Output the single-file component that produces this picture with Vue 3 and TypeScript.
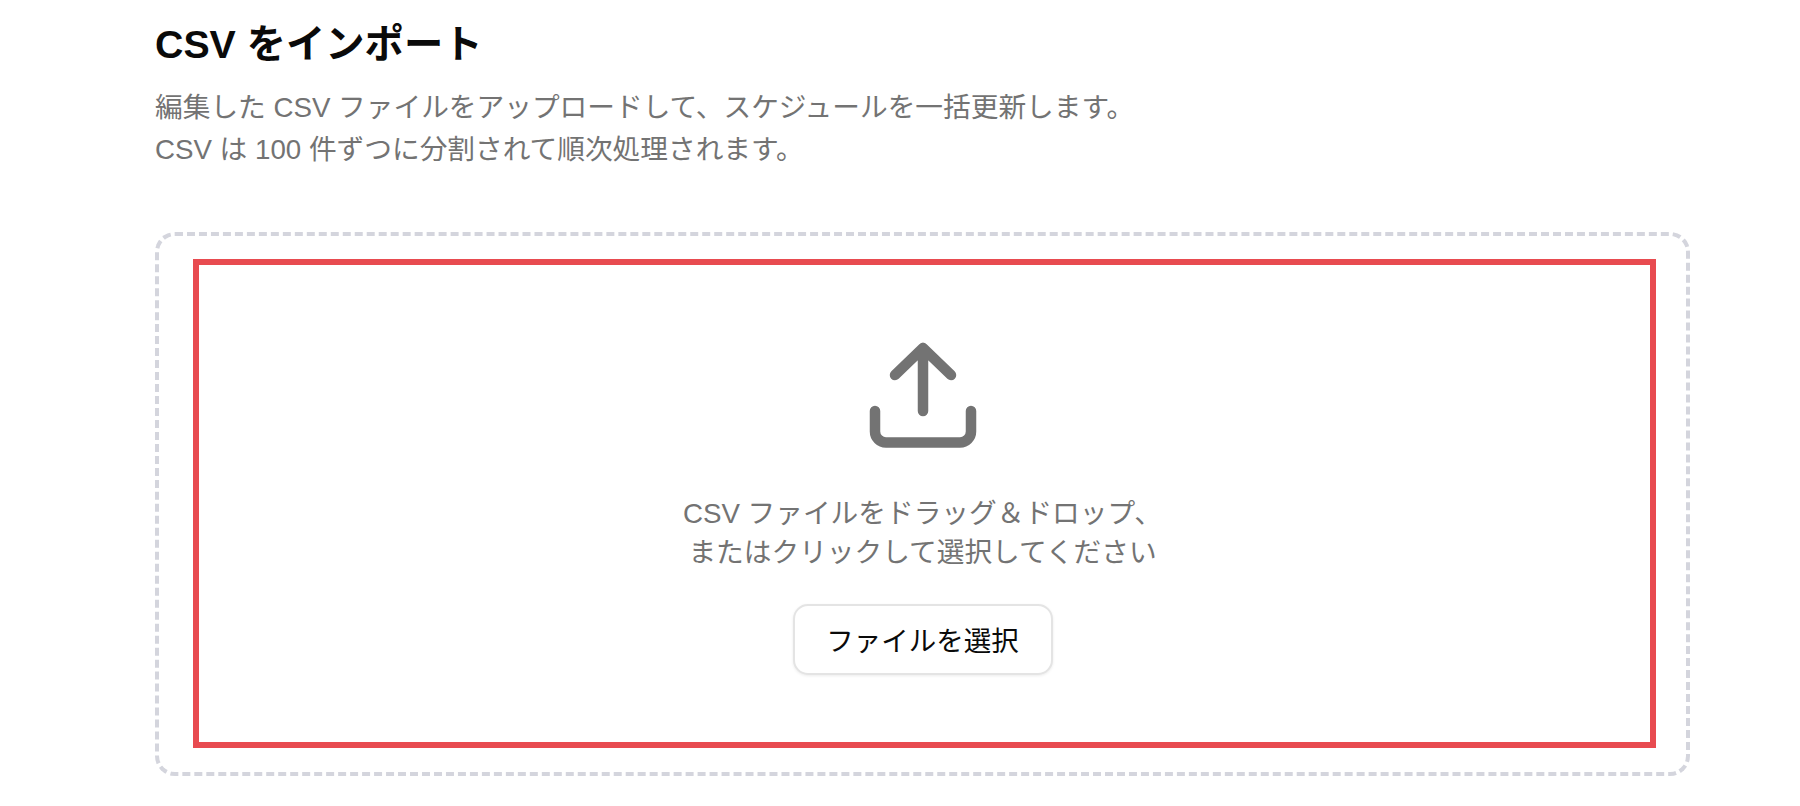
<script setup lang="ts">
const title = 'CSV をインポート'
const lines = [
  '編集した CSV ファイルをアップロードして、スケジュールを一括更新します。',
  'CSV は 100 件ずつに分割されて順次処理されます。',
]
</script>

<template>
  <main class="page">
    <h1 class="title">{{ title }}</h1>
    <div class="desc">
      <p v-for="line in lines" :key="line">{{ line }}</p>
    </div>
    <section class="drop">
      <div class="inner">
        <svg class="icon" viewBox="0 0 108 108" fill="none" stroke="#737373" stroke-width="10.500" stroke-linecap="round" stroke-linejoin="round">
          <path d="M6 71V91.500a11 11 0 0 0 11 11H91a11 11 0 0 0 11-11V71" />
          <path d="M54 71V8M26 35 54 8 82 35" />
        </svg>
        <p class="hint">CSV ファイルをドラッグ＆ドロップ、<br />またはクリックして選択してください</p>
        <button class="pick" type="button">ファイルを選択</button>
      </div>
    </section>
  </main>
</template>

<style scoped>
.page {
  width: 1800px;
  height: 806px;
  box-sizing: border-box;
  padding: 20px 110px 0 155px;
  background: #fff;
  overflow: hidden;
  font-family: "Liberation Sans", "Noto Sans CJK JP", sans-serif;
}
.title {
  margin: 0;
  font-size: 39.300px;
  line-height: 48px;
  font-weight: 700;
  color: #0a0a0a;
}
.desc {
  margin-top: 19px;
  font-size: 27.700px;
  line-height: 42px;
  color: #737373;
}
.desc p { margin: 0; }
.drop {
  margin-top: 61px;
  height: 544px;
  box-sizing: border-box;
  border: 4px dashed #d4d5dd;
  border-radius: 20px;
  padding: 23px 30px 24px 34px;
}
.inner {
  height: 100%;
  box-sizing: border-box;
  border: 6px solid #e84b50;
  display: flex;
  flex-direction: column;
  align-items: center;
  padding: 75px 4px 0 0;
}
.icon {
  width: 108px;
  height: 108px;
  display: block;
}
.hint {
  margin: 46px 0 0;
  font-size: 27.700px;
  line-height: 39px;
  color: #737373;
  text-align: center;
}
.pick {
  margin-top: 32px;
  width: 260px;
  height: 71px;
  box-sizing: border-box;
  padding-bottom: 3px;
  background: #fff;
  border: 2px solid #e4e4e4;
  border-radius: 15px;
  box-shadow: 0 1px 3px rgba(0, 0, 0, 0.08);
  font-family: inherit;
  font-size: 27.500px;
  color: #0a0a0a;
}
</style>
